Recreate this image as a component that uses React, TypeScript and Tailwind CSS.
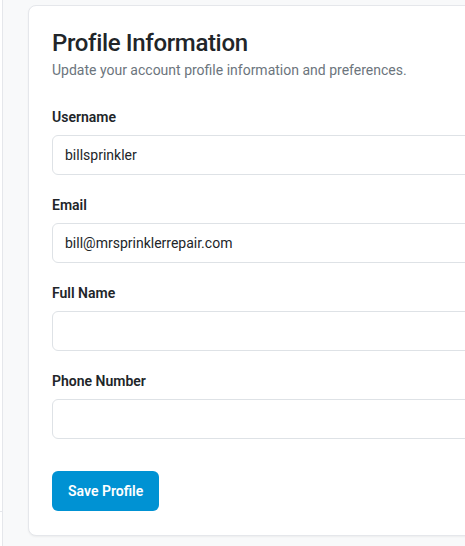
import React from "react";

function Field({ label, value }: { label: string; value?: string }) {
  return (
    <div className="flex flex-col">
      <label className="text-[14px] leading-[20px] font-semibold text-[#212529]">{label}</label>
      <div className="mt-[8px] h-[40px] rounded-[6px] border border-[#dee2e6] bg-white px-[12px] flex items-center text-[14px] text-[#212529]">
        {value}
      </div>
    </div>
  );
}

export default function App() {
  return (
    <div
      className="w-[465px] h-[546px] overflow-hidden bg-[#f8f9fa] flex"
      style={{ fontFamily: 'Roboto, "Noto Sans", sans-serif' }}
    >
      <div className="w-[3px] shrink-0 bg-white border-r border-[#e5e7eb] relative">
        <div className="absolute left-0 top-[511px] w-[2px] h-px bg-[#e5e7eb]" />
      </div>
      <div className="pl-[25px] pt-[5px]">
        <div className="w-[520px] h-[531px] bg-white rounded-[8px] border border-[#e5e7eb] shadow-[0_1px_2px_rgba(0,0,0,0.05)] px-[23px] pt-[21px]">
          <h1 className="text-[24px] leading-[32px] font-medium tracking-[-0.35px] text-[#212529]">Profile Information</h1>
          <p className="mt-[1px] text-[14px] leading-[20px] text-[#6c757d]">
            Update your account profile information and preferences.
          </p>
          <div className="mt-[27px] flex flex-col gap-[20px]">
            <Field label="Username" value="billsprinkler" />
            <Field label="Email" value="bill@mrsprinklerrepair.com" />
            <Field label="Full Name" />
            <Field label="Phone Number" />
          </div>
          <button className="mt-[32px] h-[40px] px-[16px] rounded-[6px] bg-[#0092d3] text-white text-[14px] font-semibold">
            Save Profile
          </button>
        </div>
      </div>
    </div>
  );
}
